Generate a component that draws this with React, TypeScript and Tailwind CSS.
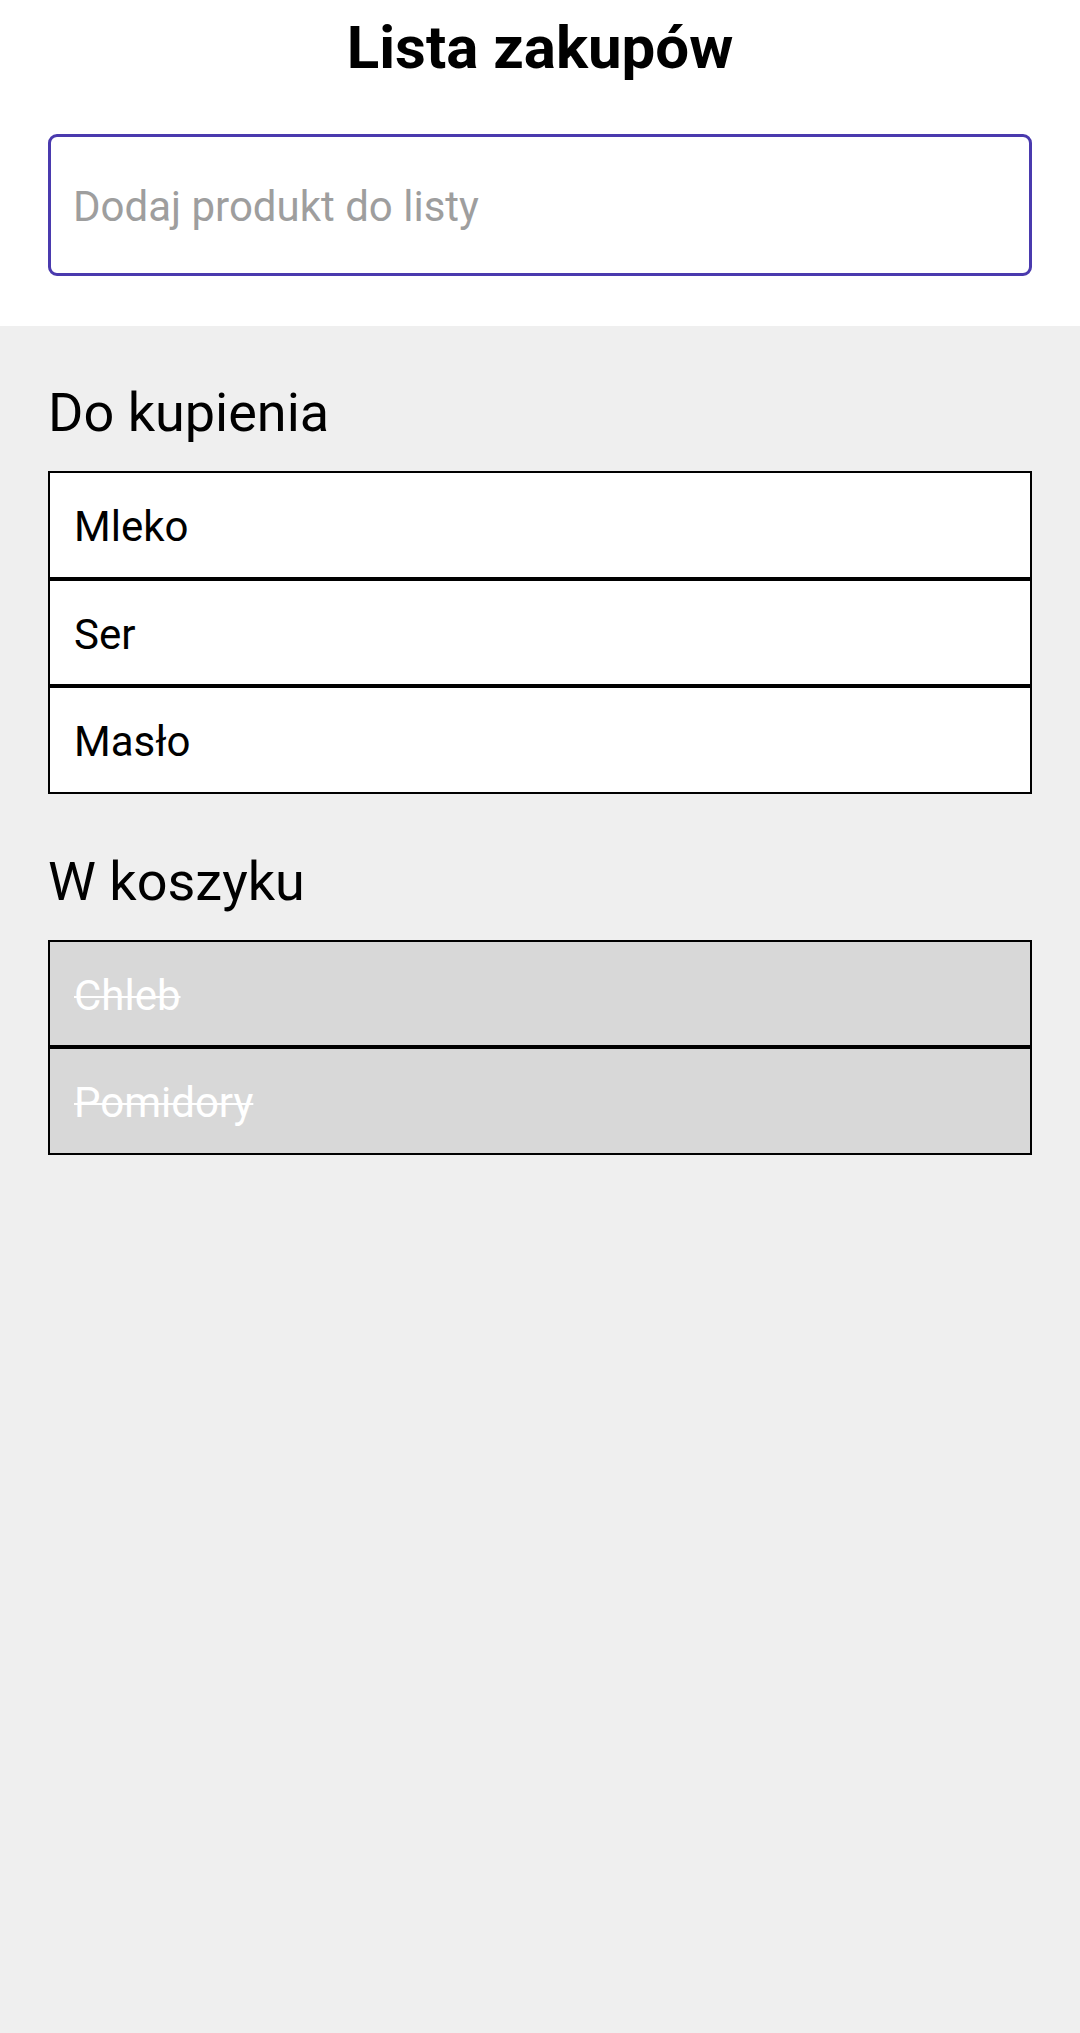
const TODO = ["Mleko", "Ser", "Masło"];
const DONE = ["Chleb", "Pomidory"];

function Item({ name, done }: { name: string; done?: boolean }) {
  return (
    <li
      className={`h-[107.5px] border-2 border-black flex items-center pl-[24px] pt-[4px] text-[42px] ${
        done ? "bg-[#d8d8d8] text-white line-through decoration-[2px]" : "bg-white text-black"
      }`}
    >
      {name}
    </li>
  );
}

function Section({ title, items, done }: { title: string; items: string[]; done?: boolean }) {
  return (
    <section>
      <h2 className="text-[54px] leading-[63px] text-black">{title}</h2>
      <ul className="mt-[27px]">
        {items.map((it) => (
          <Item key={it} name={it} done={done} />
        ))}
      </ul>
    </section>
  );
}

export default function App() {
  return (
    <div className="min-h-screen bg-[#efefef] font-['Roboto',_'Noto_Sans',_sans-serif]">
      {/* header + input */}
      <div className="bg-white px-[48px] pt-[13px] pb-[50px]">
        <h1 className="text-center text-[60px] leading-[70px] font-bold text-black">Lista zakupów</h1>
        <input
          type="text"
          placeholder="Dodaj produkt do listy"
          className="mt-[51px] block w-full h-[142px] rounded-[9px] border-[3px] border-[#4a3aae] bg-white pl-[22px] pt-[2px] text-[42px] text-black placeholder:text-[#9e9e9e] outline-none"
        />
      </div>

      {/* lists */}
      <div className="px-[48px] pt-[55px] flex flex-col gap-[56px]">
        <Section title="Do kupienia" items={TODO} />
        <Section title="W koszyku" items={DONE} done />
      </div>
    </div>
  );
}
